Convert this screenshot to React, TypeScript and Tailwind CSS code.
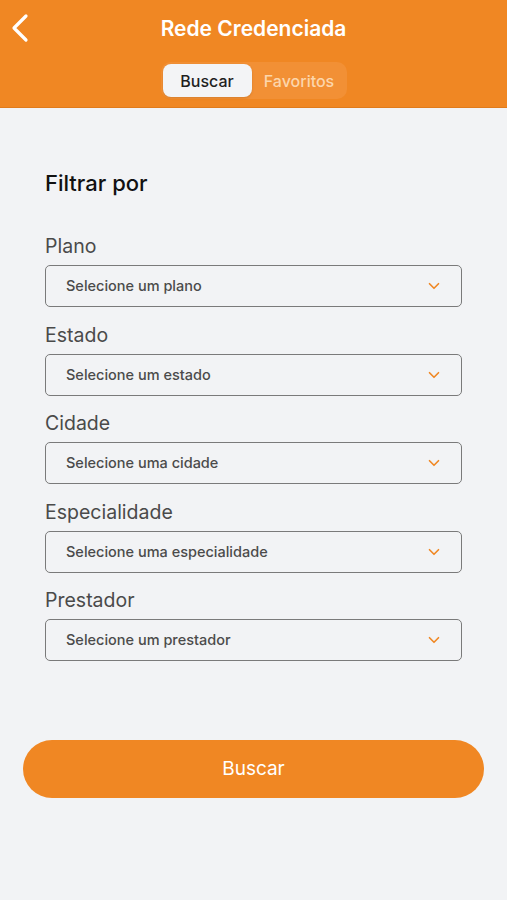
import { ChevronDown } from 'lucide-react';

const filters = [
  { label: 'Plano', placeholder: 'Selecione um plano' },
  { label: 'Estado', placeholder: 'Selecione um estado' },
  { label: 'Cidade', placeholder: 'Selecione uma cidade' },
  { label: 'Especialidade', placeholder: 'Selecione uma especialidade' },
  { label: 'Prestador', placeholder: 'Selecione um prestador' },
];

export default function App() {
  return (
    <div className="min-h-[900px] bg-[#f2f3f5] font-['Inter','Liberation_Sans',sans-serif]">
      {/* Header */}
      <div className="relative h-[108px] bg-[#f08723] border-b border-[#e07b1c]">
        <button className="absolute left-[8px] top-[12px] text-white">
          <svg width="26" height="32" viewBox="0 0 26 32" fill="none">
            <path d="M18 4 L6 16 L18 28" stroke="currentColor" strokeWidth="3.2" strokeLinecap="round" strokeLinejoin="round" />
          </svg>
        </button>
        <div className="pt-[15px] text-center text-[21px] font-semibold leading-7 text-white">
          Rede Credenciada
        </div>
        <div className="mt-[19px] flex justify-center">
          <div className="flex rounded-[10px] bg-[#f29035] p-[2px] pr-0">
            <div className="flex h-[33px] w-[89px] items-center justify-center rounded-[8px] bg-[#f3f4f6] text-[16px] font-medium text-[#1f1f1f] shadow-sm">
              Buscar
            </div>
            <div className="flex h-[33px] w-[95px] items-center justify-center text-[16px] font-medium text-[#fcd6ac]">
              Favoritos
            </div>
          </div>
        </div>
      </div>

      {/* Filters */}
      <div className="px-[45px] pt-[63px]">
        <h2 className="text-[22px] leading-6 font-medium text-[#111]">Filtrar por</h2>
        <div className="mt-[40px] flex flex-col gap-[16.5px]">
          {filters.map((f) => (
            <div key={f.label}>
              <div className="text-[19.5px] leading-[22px] text-[#4a4a4a]">{f.label}</div>
              <div className="mt-[8px] flex h-[42px] items-center justify-between rounded-[5px] border-[1.5px] border-[#7a7a7a] pl-[20px] pr-[18px]">
                <span className="text-[14.5px] font-medium text-[#4b4b4b]">{f.placeholder}</span>
                <ChevronDown className="h-[18px] w-[18px] text-[#f08723]" strokeWidth={2.2} />
              </div>
            </div>
          ))}
        </div>
      </div>

      {/* CTA */}
      <div className="px-[23px] pt-[79px]">
        <button className="h-[58px] w-full rounded-full bg-[#f08723] text-[19px] text-white">
          Buscar
        </button>
      </div>
    </div>
  );
}
